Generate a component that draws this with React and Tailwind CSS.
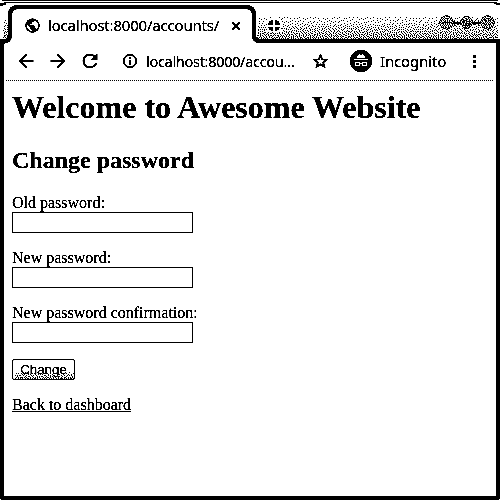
import React from "react";
import { MdArrowBack, MdArrowForward, MdPublic, MdRefresh } from "react-icons/md";

// Repeatable noise in -0.5..0.5 that keeps the dots from forming stripes.
function noise(x, y) {
  const n = Math.sin(x * 12.9898 + y * 78.233) * 43758.5453;
  return n - Math.floor(n) - 0.5;
}

// One-bit error diffusion: returns a path of 1px cells for the given darkness.
function dither(x0, y0, w, h, darkness) {
  let next = new Array(w + 2).fill(0);
  let d = "";
  for (let y = 0; y < h; y++) {
    const row = next;
    next = new Array(w + 2).fill(0);
    for (let x = 0; x < w; x++) {
      const v = darkness(y, x) + row[x + 1];
      const on = v > 0.5 + noise(x, y) * 0.35;
      const e = v - (on ? 1 : 0);
      if (on) d += `M${x0 + x} ${y0 + y}h1v1h-1z`;
      row[x + 2] += (e * 7) / 16;
      next[x] += (e * 3) / 16;
      next[x + 1] += (e * 5) / 16;
      next[x + 2] += e / 16;
    }
  }
  return d;
}

// Round window control: dark broken rim, half-tone face.
function disc(cx, cy, r) {
  const size = Math.ceil(r) * 2 + 1;
  const c = (size - 1) / 2;
  return dither(cx - c, cy - c, size, size, (y, x) => {
    const q = Math.hypot(x - c, y - c);
    if (q > r + 0.2) return 0;
    return q > r - 1 ? 0.82 : 0.5;
  });
}

const shade = (y) => (y < 9 ? 0.07 + y * 0.009 : 0.17 + (y - 9) * 0.018);
const STRIP = dither(257, 15, 241, 24, shade);
const LEFT = dither(3, 17, 5, 23, (y) => 0.06 + y * 0.018);
const BUTTON = dither(2, 11, 59, 8, (y) => 0.08 + y * 0.055);
const DISCS = disc(446, 22, 7) + disc(466, 22, 6.2) + disc(487, 22, 7);

function TabStrip() {
  return (
    <svg className="absolute inset-0" width="500" height="44" viewBox="0 0 500 44" aria-hidden="true">
      <g shapeRendering="crispEdges">
        <path d="M2 0H498V1H2zM4 2H497V3H4zM0 3h6v2H3v1H0zM494 3h6v2h-4v-1h-2z" />
        <path d={LEFT} />
        <path d={STRIP} />
      </g>
      <path d="M0 41.5H4Q10 41 10 35V15Q10 7 18 7H246Q254 7 254 15V35Q254 41 260 41H500" fill="none" stroke="#000" strokeWidth="4" />
      <g shapeRendering="crispEdges">
        <path d="M266 18h16v15h-16z" fill="#fff" />
        <path d="M271 20h2v5h-5v-2h1v-2h2zM275 20h2v1h2v2h1v2h-5zM268 27h5v4h-2v-1h-2v-2h-1zM275 27h5v1h-1v2h-2v1h-2z" />
        <path d="M266 19h1v1h-1zM281 19h1v1h-1zM266 24h1v1h-1zM281 28h1v1h-1zM266 29h1v1h-1zM268 32h1v1h-1zM279 32h1v1h-1zM272 32h1v1h-1z" />
      </g>
      <g shapeRendering="crispEdges">
        <circle cx="446.5" cy="22.5" r="8" fill="#fff" />
        <circle cx="466.5" cy="22.5" r="7" fill="#fff" />
        <circle cx="487.5" cy="22.5" r="8" fill="#fff" />
        <path d={DISCS} />
        <path d="M453 22h7v2h-7zM454 20h1v6h-1zM457 21h1v4h-1zM473 22h7v2h-7zM474 21h1v4h-1zM478 20h1v6h-1z" />
        <path d="M443 22h7v1h-7zM463 19h1v7h-1zM466 19h1v7h-1zM469 19h1v7h-1zM463 25h7v1h-7z" />
        <path d="M484.500 19.500l6 6M490.500 19.500l-6 6" stroke="#000" />
      </g>
    </svg>
  );
}

function CloseIcon() {
  return (
    <svg className="ml-[10px]" width="8" height="8" viewBox="0 0 8 8" aria-hidden="true">
      <path d="M.5 .5l7 7M7.500 .5l-7 7" stroke="#000" strokeWidth="1.900" />
    </svg>
  );
}

function InfoIcon() {
  return (
    <svg className="ml-[22px] shrink-0" width="14" height="14" viewBox="0 0 14 14" aria-hidden="true">
      <circle cx="7" cy="7" r="6.2" fill="none" stroke="#000" strokeWidth="1.500" />
      <path d="M6 3h2v2H6zM6 6h2v5H6z" />
    </svg>
  );
}

function StarIcon() {
  return (
    <svg className="ml-[17px] shrink-0" width="15" height="14" viewBox="0 0 15 14" aria-hidden="true">
      <path d="M7.500 1.300L9.200 5.300L13.500 5.600L10.200 8.400L11.300 12.700L7.500 10.400L3.700 12.700L4.800 8.400L1.500 5.600L5.800 5.300Z" fill="none" stroke="#000" strokeWidth="1.600" />
    </svg>
  );
}

function Incognito() {
  return (
    <svg width="22" height="22" viewBox="0 0 22 22" aria-hidden="true">
      <circle cx="11" cy="11" r="11" />
      <g shapeRendering="crispEdges">
        <path d="M7 8V6h1V5h1V4h1v1h2V4h1v1h1v1h1v2zM4 9h14v1H4z" fill="#fff" />
        <path d="M5.500 12.500h4v3h-4zM12.500 12.500h4v3h-4zM9.500 13.500h3" fill="none" stroke="#fff" />
      </g>
    </svg>
  );
}

function MenuDots() {
  return (
    <svg className="ml-[25px] shrink-0" width="3" height="13" viewBox="0 0 3 13" shapeRendering="crispEdges" aria-hidden="true">
      <path d="M0 0h3v3H0zM0 5h3v3H0zM0 10h3v3H0z" />
    </svg>
  );
}

function Field({ label }) {
  return (
    <label className="mb-[15px] block h-10 leading-[18px]">
      <span className="block pt-px whitespace-nowrap">{label}</span>
      <input type="password" className="block h-[21px] w-[181px] border border-black bg-white outline-none" />
    </label>
  );
}

export default function App() {
  return (
    <div className="relative flex h-[500px] w-[500px] flex-col overflow-hidden bg-white text-black brightness-[0.74] contrast-[10]">
      <header className="relative h-[43px] shrink-0 font-['Noto_Sans',sans-serif]">
        <TabStrip />
        <div className="relative flex h-[43px] items-center pt-2 pl-[23.500px]">
          <MdPublic size={17} />
          <span className="ml-[7.500px] w-[174px] pb-px text-[15px] leading-5 tracking-[-0.2px] whitespace-nowrap">localhost:8000/accounts/</span>
          <CloseIcon />
        </div>
      </header>
      <div className="flex min-h-0 flex-1 flex-col rounded-b-[3px] border-x-4 border-b-4 border-black">
        <div className="flex h-[37px] shrink-0 items-center pb-px pl-[11px] font-['Noto_Sans',sans-serif] text-[15px] leading-5">
          <MdArrowBack size={22} />
          <MdArrowForward size={22} className="ml-[10px]" />
          <MdRefresh size={22} className="ml-[10px]" />
          <InfoIcon />
          <span className="ml-[9px] w-[150px] pb-px text-[14.500px] tracking-[-0.3px] whitespace-nowrap">localhost:8000/accou...</span>
          <StarIcon />
          <span className="ml-[22px] shrink-0"><Incognito /></span>
          <span className="ml-2 w-[68px] pb-px tracking-[-0.15px]">Incognito</span>
          <MenuDots />
        </div>
        <div className="mx-[2px] h-px shrink-0 bg-[repeating-linear-gradient(to_right,#000_0_1px,#fff_1px_2px)]" />
        <main className="px-2 pt-2 font-['Liberation_Serif',serif] text-[16px]">
          <h1 className="mb-[22px] text-[32px] leading-9 font-bold whitespace-nowrap">Welcome to Awesome Website</h1>
          <h2 className="mb-[19px] text-[24px] leading-[27px] font-bold">Change password</h2>
          <Field label="Old password:" />
          <Field label="New password:" />
          <Field label="New password confirmation:" />
          <button className="relative mt-4 mb-4 flex h-[21px] w-[63px] items-center justify-center rounded-[2px] border border-black font-['Liberation_Sans',sans-serif] text-[13.333px] leading-[15px]">
            <svg className="absolute inset-0" width="61" height="19" shapeRendering="crispEdges" aria-hidden="true">
              <path d={BUTTON} />
            </svg>
            <span className="relative">Change</span>
          </button>
          <a href="#" className="block w-fit leading-[18px] underline">Back to dashboard</a>
        </main>
      </div>
    </div>
  );
}
